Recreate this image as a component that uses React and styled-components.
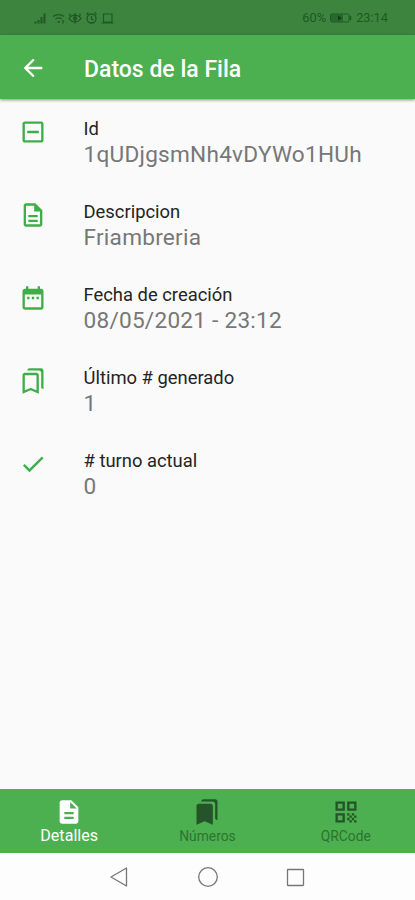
import React, { useState } from "react";
import styled, { createGlobalStyle } from "styled-components";
import {
  MdArrowBack,
  MdBookmarks,
  MdCheck,
  MdDateRange,
  MdDescription,
  MdOutlineBookmarks,
  MdOutlineDescription,
  MdOutlineIndeterminateCheckBox,
  MdQrCode,
} from "react-icons/md";

const GlobalStyle = createGlobalStyle`
  * {
    box-sizing: border-box;
  }

  body {
    margin: 0;
    font-family: Roboto, "Liberation Sans", sans-serif;
    background: #fafafa;
  }
`;

const Screen = styled.div`
  display: flex;
  flex-direction: column;
  height: 900px;
  background: #fafafa;
  overflow: hidden;
`;

const StatusBar = styled.div`
  display: flex;
  justify-content: space-between;
  align-items: center;
  flex: 0 0 35px;
  padding: 1px 27px 0 34px;
  background: #3d853f;
  color: #1f5825;
`;

const StatusGroup = styled.div`
  display: flex;
  align-items: center;
  gap: ${(p) => p.$gap || 0}px;
  font-size: 12.8px;
  line-height: 16px;
`;

const AppBar = styled.header`
  display: flex;
  align-items: center;
  flex: 0 0 64px;
  padding: 1px 19px 0;
  gap: 37px;
  background: #4caf50;
  color: #fff;
  box-shadow: 0 1px 3px rgba(0, 0, 0, 0.45);
`;

const BackButton = styled.button`
  display: flex;
  padding: 0;
  border: none;
  background: none;
  color: inherit;
  font-size: 28px;
  cursor: pointer;
`;

const Title = styled.h1`
  margin: 4px 0 0;
  font-size: 23px;
  font-weight: 500;
  line-height: 28px;
`;

const List = styled.main`
  flex: 1;
  padding-top: 19px;
`;

const Row = styled.section`
  display: flex;
  height: 83px;
  padding-left: 18.5px;
  gap: 37px;
`;

const RowIcon = styled.div`
  display: flex;
  height: 28px;
  color: #3fae49;
  font-size: 28px;
`;

const Label = styled.div`
  font-size: 18.4px;
  line-height: 22px;
  color: #242424;
`;

const Value = styled.div`
  font-size: 22.6px;
  line-height: 30px;
  letter-spacing: 0.25px;
  color: #777;
`;

const BottomNav = styled.nav`
  display: grid;
  grid-template-columns: repeat(3, 1fr);
  flex: 0 0 64px;
  background: #4caf50;
`;

const Tab = styled.button`
  display: flex;
  flex-direction: column;
  align-items: center;
  padding: 9px 0 0;
  border: none;
  background: none;
  color: ${(p) => (p.$active ? "#fff" : "#245427")};
  font-family: inherit;
  font-size: 28px;
  cursor: pointer;
`;

const TabLabel = styled.span`
  font-size: ${(p) => (p.$active ? 16.1 : 13.8)}px;
  line-height: 18px;
  margin-top: 1px;
  color: ${(p) => (p.$active ? "#fff" : "#2d7431")};
`;

const SystemNav = styled.div`
  display: flex;
  justify-content: center;
  align-items: center;
  flex: 0 0 47px;
  gap: 64px;
  background: #fdfdfd;
`;

const fields = [
  { icon: MdOutlineIndeterminateCheckBox, label: "Id", value: "1qUDjgsmNh4vDYWo1HUh" },
  { icon: MdOutlineDescription, label: "Descripcion", value: "Friambreria" },
  { icon: MdDateRange, label: "Fecha de creación", value: "08/05/2021 - 23:12" },
  { icon: MdOutlineBookmarks, label: "Último # generado", value: "1" },
  { icon: MdCheck, label: "# turno actual", value: "0" },
];

const tabs = [
  { icon: MdDescription, label: "Detalles" },
  { icon: MdBookmarks, label: "Números" },
  { icon: MdQrCode, label: "QRCode" },
];

const StatusIcons = () => (
  <svg width="80" height="14" viewBox="0 0 80 14" fill="none" stroke="currentColor" strokeWidth="1.3">
    {/* signal */}
    <path d="M1.5 10.500v2M4.500 9V12.500M7.500 6v6.500M10.500 2.500V12.500" strokeWidth="2" />
    {/* wifi */}
    <path d="M19 5.500c3-2.500 8-2.500 11 0M21.500 8c2-1.400 4.500-1.400 6 0M23.500 11h2.500M29 9v3.500" />
    {/* eye comfort */}
    <path d="M35 7.500c3-4.500 9-4.500 12 0c-3 4.500-9 4.500-12 0zM41 2v10.500M36 2.500v2.500M46 2.500v2.500" />
    <circle cx="41" cy="7.500" r="1.500" />
    {/* alarm */}
    <circle cx="57.500" cy="7.500" r="4.500" />
    <path d="M57.500 5v3l2 1M52.500 3.500l2-2M62.500 3.500l-2-2" />
    {/* screen */}
    <path d="M69.500 3h8.500v8h-8.500zM67.500 12h12" strokeWidth="1.200" />
  </svg>
);

const Battery = () => (
  <svg width="24" height="12" viewBox="0 0 24 12">
    <rect x="1.500" y="2" width="18.500" height="8" rx="1.500" fill="none" stroke="currentColor" />
    <rect x="2" y="2.500" width="12" height="7" fill="currentColor" opacity="0.650" />
    <path d="M9 3.500L13 6l-4 2.500z" fill="#0f3d14" />
    <path d="M21.500 4v4" stroke="currentColor" strokeWidth="1.500" />
  </svg>
);

const App = () => {
  const [activeTab, setActiveTab] = useState("Detalles");

  return (
    <Screen>
      <GlobalStyle />
      <StatusBar>
        <StatusGroup>
          <StatusIcons />
        </StatusGroup>
        <StatusGroup $gap={3}>
          <span>60%</span>
          <Battery />
          <span>23:14</span>
        </StatusGroup>
      </StatusBar>

      <AppBar>
        <BackButton aria-label="Volver">
          <MdArrowBack />
        </BackButton>
        <Title>Datos de la Fila</Title>
      </AppBar>

      <List>
        {fields.map(({ icon: Icon, label, value }) => (
          <Row key={label}>
            <RowIcon>
              <Icon />
            </RowIcon>
            <div>
              <Label>{label}</Label>
              <Value>{value}</Value>
            </div>
          </Row>
        ))}
      </List>

      <BottomNav>
        {tabs.map(({ icon: Icon, label }) => (
          <Tab key={label} $active={label === activeTab} onClick={() => setActiveTab(label)}>
            <Icon />
            <TabLabel $active={label === activeTab}>{label}</TabLabel>
          </Tab>
        ))}
      </BottomNav>

      <SystemNav>
        <svg width="24" height="24" viewBox="0 0 24 24" fill="none" stroke="#777" strokeWidth="1.3">
          <path d="M18.500 3v18L3 12z" strokeLinejoin="round" />
        </svg>
        <svg width="24" height="24" viewBox="0 0 24 24" fill="none" stroke="#777" strokeWidth="1.3">
          <circle cx="12" cy="12" r="9.3" />
        </svg>
        <svg width="24" height="24" viewBox="0 0 24 24" fill="none" stroke="#777" strokeWidth="1.3">
          <rect x="3.5" y="4.5" width="16" height="16" rx="0.5" />
        </svg>
      </SystemNav>
    </Screen>
  );
};

export default App;
